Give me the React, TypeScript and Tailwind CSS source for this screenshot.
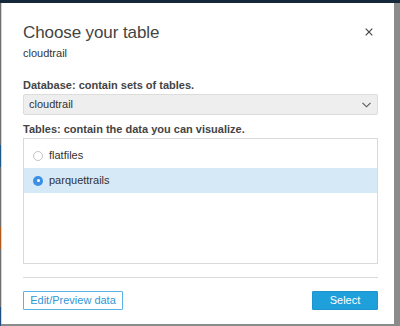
import React from 'react';

const tables = ['flatfiles', 'parquettrails'];

export default function App() {
  const selected = 'parquettrails';

  return (
    <div
      className="relative w-[400px] h-[326px] overflow-hidden bg-[#8b8b8b]"
      style={{ fontFamily: '"Liberation Sans", Arial, sans-serif' }}
    >
      {/* page behind the modal */}
      <div className="h-[3px] bg-[#15293a]" />
      <div className="absolute left-0 top-[3px] w-[1px] h-[323px] bg-[#6f6f6f]">
        <div className="mt-[142px] h-[22px] bg-[#1f5a86]" />
        <div className="mt-[60px] h-[22px] bg-[#b35a1a]" />
        <div className="mt-[58px] h-[22px] bg-[#1f4f80]" />
      </div>

      {/* modal */}
      <div className="absolute left-[1px] top-[3px] w-[393px] h-[321px] bg-white border-l border-[#cfd8df] px-[21px] pt-[20px]">
        <button className="absolute right-[20px] top-[24px] w-[10px] h-[10px] flex items-center justify-center">
          <svg width="8" height="8" viewBox="0 0 8 8">
            <path d="M0.7 0.7 L7.3 7.3 M7.3 0.7 L0.7 7.3" stroke="#444" strokeWidth="1.2" />
          </svg>
        </button>

        <h1 className="text-[17px] leading-[20px] text-[#444] font-normal tracking-[-0.1px]">Choose your table</h1>
        <div className="mt-[3px] text-[11px] leading-[14px] text-[#333]">cloudtrail</div>

        <div className="mt-[18px] text-[11px] leading-[14px] font-bold text-[#444]">
          Database: contain sets of tables.
        </div>
        <div className="mt-[2px] h-[21px] w-[355px] bg-[#eeeeee] border border-[#dcdcdc] rounded-[2px] flex items-center justify-between pl-[5px] pr-[6px]">
          <span className="text-[11px] text-[#333]">cloudtrail</span>
          <svg width="9" height="6" viewBox="0 0 9 6">
            <path d="M0.5 0.8 L4.5 4.8 L8.5 0.8" stroke="#555" strokeWidth="1.1" fill="none" />
          </svg>
        </div>

        <div className="mt-[7px] text-[11px] leading-[14px] font-bold text-[#444]">
          Tables: contain the data you can visualize.
        </div>
        <div className="mt-[2px] h-[126px] w-[355px] border border-[#d9d9d9] pt-[4px]">
          {tables.map((t) => {
            const on = t === selected;
            return (
              <div
                key={t}
                className={`h-[25px] flex items-center pl-[9px] gap-[6px] ${on ? 'bg-[#d5e9f6]' : ''}`}
              >
                {on ? (
                  <span className="w-[10px] h-[10px] rounded-full bg-[#3b8fe6] flex items-center justify-center">
                    <span className="w-[3px] h-[3px] rounded-full bg-white" />
                  </span>
                ) : (
                  <span className="w-[10px] h-[10px] rounded-full border border-[#c4c4c4] bg-white" />
                )}
                <span className="text-[11px] text-[#333]">{t}</span>
              </div>
            );
          })}
        </div>

        <div className="mt-[13px] h-px w-[355px] bg-[#dadada]" />

        <div className="mt-[13px] w-[355px] flex items-center justify-between">
          <button className="h-[19px] w-[100px] border border-[#5bb2e2] rounded-[1px] bg-white text-[11px] text-[#2f97d6]">
            Edit/Preview data
          </button>
          <button className="h-[19px] w-[66px] border border-[#1d94d0] rounded-[1px] bg-[#20a0db] text-[11px] text-white">
            Select
          </button>
        </div>
      </div>
    </div>
  );
}
